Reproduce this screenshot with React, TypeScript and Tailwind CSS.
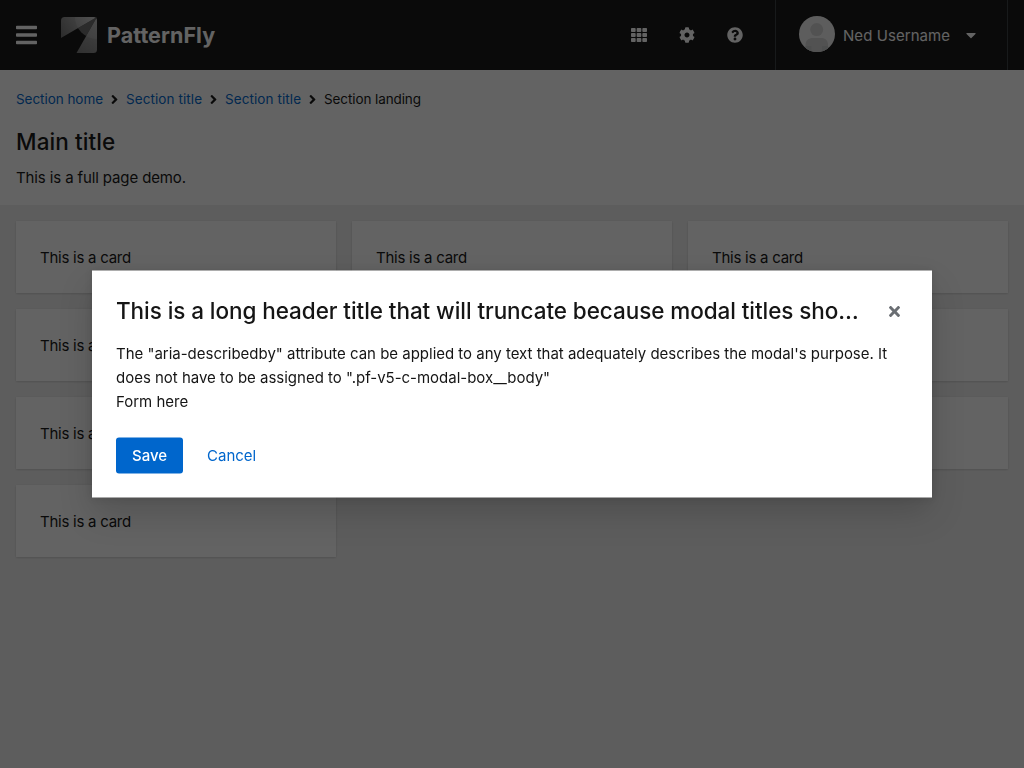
import { FaAngleRight, FaBars, FaCaretDown, FaCog, FaQuestionCircle, FaTh, FaTimes } from "react-icons/fa";

function Logo() {
  return (
    <svg width="36" height="36" viewBox="0 0 36 36" aria-hidden="true">
      <defs>
        <linearGradient id="left-wing" x1="30" y1="0" x2="0" y2="20" gradientUnits="userSpaceOnUse">
          <stop stopColor="#c0c0c0" />
          <stop offset="1" stopColor="#707070" />
        </linearGradient>
        <linearGradient id="right-wing" x1="36" y1="4" x2="18" y2="36" gradientUnits="userSpaceOnUse">
          <stop stopColor="#b0b0b0" />
          <stop offset="1" stopColor="#7c7c7c" />
        </linearGradient>
        <clipPath id="logo-tile">
          <rect width="36" height="36" rx="3.5" />
        </clipPath>
        <clipPath id="logo-fold">
          <path d="M36 0L0 21L15.5 36Z" />
        </clipPath>
        <clipPath id="logo-wings">
          <path d="M0 0H36L0 21ZM36 0V36H15.5Z" />
        </clipPath>
      </defs>
      <g clipPath="url(#logo-fold)">
        <circle cx="36" cy="0" r="22" fill="#6c6c6c" />
      </g>
      <g clipPath="url(#logo-tile)">
        <path d="M0 0H36L0 21Z" fill="url(#left-wing)" />
        <path d="M36 0V36H15.5Z" fill="url(#right-wing)" />
        <g clipPath="url(#logo-wings)">
          <circle cx="36" cy="0" r="22" fill="#fff" fillOpacity="0.14" />
        </g>
      </g>
    </svg>
  );
}

function Avatar() {
  return (
    <svg className="mb-[2px]" width="36" height="36" viewBox="0 0 36 36" aria-hidden="true">
      <defs>
        <clipPath id="avatar-circle">
          <circle cx="18" cy="18" r="18" />
        </clipPath>
      </defs>
      <g clipPath="url(#avatar-circle)">
        <rect width="36" height="36" fill="#f0f0f0" />
        <circle cx="17.7" cy="13.6" r="6.5" fill="#d2d2d2" />
        <path d="M6.5 36V29C6.5 24.5 9.5 22 14 22H22C26.5 22 29 24.5 29 29V36Z" fill="#d2d2d2" />
        <path d="M6.5 30H12.5V36H6.5ZM23 30H29V36H23Z" fill="#c6c7c8" />
      </g>
    </svg>
  );
}

function Header() {
  return (
    <header className="flex h-[70px] items-center bg-[#151515] pl-4 text-white">
      <FaBars className="h-6 w-[21px]" />
      <div className="ml-6 flex items-center gap-[10px]">
        <Logo />
        <span className="text-[21.5px] font-bold leading-8 tracking-[0.05px]">PatternFly</span>
      </div>
      <div className="ml-auto flex items-center gap-8">
        <FaTh className="size-4" />
        <FaCog className="size-4" />
        <FaQuestionCircle className="size-4" />
      </div>
      <div className="ml-8 flex h-full w-[233px] items-center border-x border-[#3c3f42] pl-[23px]">
        <Avatar />
        <span className="ml-2 pt-0.5 text-[15px] leading-6 tracking-[0.06px]">Ned Username</span>
        <FaCaretDown className="ml-4 h-4 w-[10px]" />
      </div>
      <div className="w-4" />
    </header>
  );
}

function Breadcrumb() {
  return (
    <nav className="flex h-[21px] items-center text-[13.5px] text-[#0066cc]">
      {["Section home", "Section title", "Section title"].map((label, i) => (
        <span key={i} className="flex items-center">
          <a className={i === 0 ? "w-[87px] whitespace-nowrap tracking-[-0.05px]" : "w-[76px] whitespace-nowrap tracking-[0.08px]"}>{label}</a>
          <FaAngleRight viewBox="24 96 208 320" className="mx-2 h-[9px] w-[7px] text-[#151515]" />
        </span>
      ))}
      <span className="tracking-[-0.1px] text-[#151515]">Section landing</span>
    </nav>
  );
}

function Card() {
  return (
    <article className="h-[72px] bg-white px-6 pt-[25px] text-[15px] leading-6 tracking-[-0.25px] shadow-[0_1px_2px_0_rgba(3,3,3,0.12),0_0_2px_0_rgba(3,3,3,0.06)]">
      This is a card
    </article>
  );
}

function Modal() {
  return (
    <div className="fixed inset-0 flex items-center justify-center bg-[rgba(3,3,3,0.62)] pb-px">
      <section
        role="dialog"
        className="h-[227px] w-[840px] transform-[translateY(0.5px)] bg-white p-6 shadow-[0_16px_32px_0_rgba(3,3,3,0.16),0_0_8px_0_rgba(3,3,3,0.1)]"
      >
        <div className="flex h-[31px] items-center justify-between">
          <h1 className="w-[744px] truncate text-[22.5px] font-medium leading-[31px] tracking-[-0.07px]">
            This is a long header title that will truncate because modal titles should be very short
          </h1>
          <button className="mr-[8px] mt-[3px]" aria-label="Close">
            <FaTimes className="h-4 w-[11px] text-[#6a6e73]" />
          </button>
        </div>
        <div className="mt-4 text-[15px] leading-6 tracking-[-0.015px]">
          <p>
            The "aria-describedby" attribute can be applied to any text that adequately describes the modal's purpose. It
            <br />
            does not have to be assigned to ".pf-v5-c-modal-box__body"
          </p>
          <p>Form here</p>
        </div>
        <footer className="mt-6 flex gap-2 text-[15px] leading-6">
          <button className="h-9 w-[67px] rounded-[3px] bg-[#0066cc] font-medium text-white">Save</button>
          <button className="h-9 px-4 text-[#0066cc]">Cancel</button>
        </footer>
      </section>
    </div>
  );
}

export default function App() {
  return (
    <div className="flex h-screen flex-col overflow-hidden bg-[#f0f0f0] font-['Inter',sans-serif] text-[#151515]">
      <Header />
      <div className="h-[135px] bg-white px-4 pt-[19px]">
        <Breadcrumb />
        <h1 className="mt-4 text-[22.5px] font-medium leading-[31px] tracking-[0.1px]">Main title</h1>
        <p className="mt-[9px] text-[15px] leading-6 tracking-[-0.12px]">This is a full page demo.</p>
      </div>
      <main className="grid grid-cols-3 gap-4 p-4">
        {Array.from({ length: 10 }, (_, i) => (
          <Card key={i} />
        ))}
      </main>
      <Modal />
    </div>
  );
}
